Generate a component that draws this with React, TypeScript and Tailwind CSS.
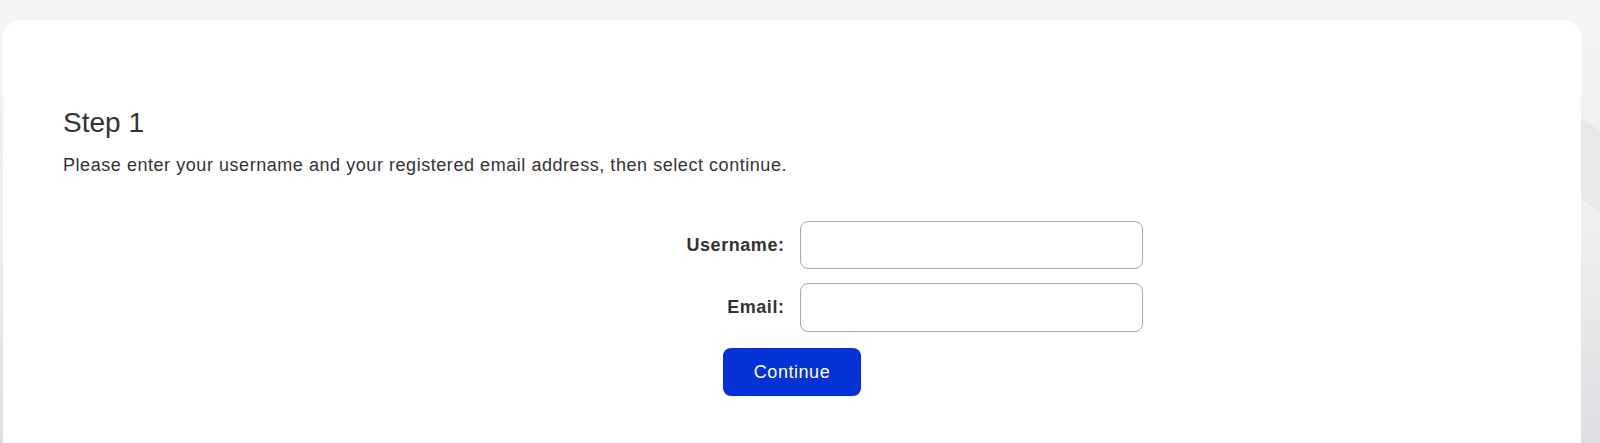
import React from "react";

export default function App() {
  return (
    <div
      className="relative w-full h-[443px] overflow-hidden bg-gradient-to-b from-[#f3f4f4] via-[#eeeff0] to-[#dddee1]"
      style={{ fontFamily: '"Liberation Sans", Arial, sans-serif' }}
    >
      <svg
        className="absolute inset-0 w-full h-full"
        viewBox="0 0 1600 443"
        preserveAspectRatio="none"
        aria-hidden="true"
      >
        <polygon points="1540,90 1600,131 1600,214 1540,162" fill="#e7e8ea" />
      </svg>
      <div className="relative pt-[20px] pl-[3px] pr-[19px] h-full">
        <div className="bg-white rounded-[18px] h-[480px] px-[60px] pt-[86px] text-[#333333]">
          <h1 className="text-[28px] leading-[1.2] font-normal">Step 1</h1>
          <p className="mt-[15px] text-[18px] leading-[1.2] tracking-[0.55px]">
            Please enter your username and your registered email address, then select continue.
          </p>
          <div className="mt-[45px] grid grid-cols-2 gap-x-[15px] gap-y-[14px]">
            <label className="flex items-center justify-end text-[18px] font-bold tracking-[0.55px]">Username:</label>
            <div>
              <input
                type="text"
                className="block w-[343px] h-[48px] border border-[#a9a9a9] rounded-[8px] bg-white px-3 text-[18px] outline-none"
              />
            </div>
            <label className="flex items-center justify-end text-[18px] font-bold tracking-[0.55px]">Email:</label>
            <div>
              <input
                type="text"
                className="block w-[343px] h-[49px] border border-[#a9a9a9] rounded-[8px] bg-white px-3 text-[18px] outline-none"
              />
            </div>
          </div>
          <div className="mt-[16px] flex justify-center">
            <button className="w-[138px] h-[48px] rounded-[8px] bg-[#0332d6] text-white text-[18px] tracking-[0.55px]">
              Continue
            </button>
          </div>
        </div>
      </div>
    </div>
  );
}
